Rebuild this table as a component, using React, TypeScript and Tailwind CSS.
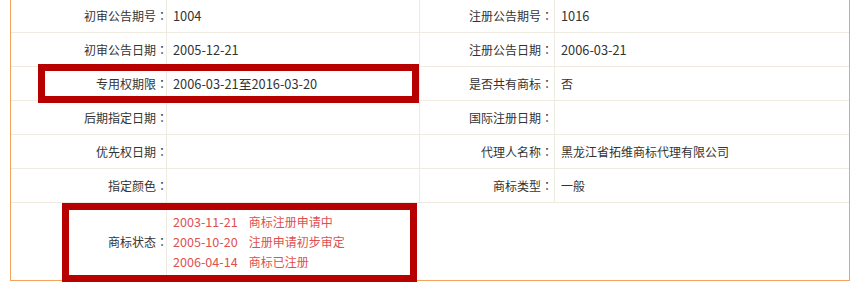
import React from 'react'

const rows = [
  ['初审公告期号', '1004', '注册公告期号', '1016'],
  ['初审公告日期', '2005-12-21', '注册公告日期', '2006-03-21'],
  ['专用权期限', '2006-03-21至2016-03-20', '是否共有商标', '否'],
  ['后期指定日期', '', '国际注册日期', ''],
  ['优先权日期', '', '代理人名称', '黑龙江省拓维商标代理有限公司'],
  ['指定颜色', '', '商标类型', '一般'],
]

const status = [
  ['2003-11-21', '商标注册申请中'],
  ['2005-10-20', '注册申请初步审定'],
  ['2006-04-14', '商标已注册'],
]

// digits in the source are a bit wider than the CJK font's own
const isNum = (s: string) => /^[0-9]/.test(s)

function Label({ text, tight }: { text: string; tight?: boolean }) {
  return (
    <>
      {text}
      {/* JP face keeps the full-width colon centred in its box */}
      <span className={`${tight ? 'mr-[-2px]' : ''} [font-family:'Noto_Sans_CJK_JP',sans-serif]`}>：</span>
    </>
  )
}

function Value({ text }: { text: string }) {
  return <span className={isNum(text) ? 'text-[12.8px]' : ''}>{text}</span>
}

export default function App() {
  return (
    <div className="relative w-[855px] h-[285px] overflow-hidden bg-white text-[12px] text-[#333] [font-family:'Noto_Sans_CJK_SC','Liberation_Sans',sans-serif]">
      <div className="ml-[10px] mt-[-1px] w-[840px] border-x border-b border-[#f3a35a]">
        {rows.map((r, i) => (
          <div key={i} className="flex h-[34px] border-b border-[#efebe1]">
            <div className="w-[156px] flex items-center justify-end border-r border-[#efebe1]"><Label text={r[0]} tight /></div>
            <div className="w-[253px] flex items-center pl-[6px] border-r border-[#efebe1]"><Value text={r[1]} /></div>
            <div className="w-[135px] flex items-center justify-end pr-[1px] border-r border-[#efebe1]"><Label text={r[2]} /></div>
            <div className="flex-1 flex items-center pl-[6px]"><Value text={r[3]} /></div>
          </div>
        ))}
        <div className="flex h-[77px]">
          <div className="w-[156px] flex items-center justify-end border-r border-[#efebe1]"><Label text="商标状态" tight /></div>
          <div className="flex-1 flex flex-col justify-center pl-[6px] text-[#e0504f] leading-[20px]">
            {status.map((s, i) => (
              <div key={i} className="flex items-baseline gap-[11px]">
                <span className="text-[12.6px]">{s[0]}</span>
                <span>{s[1]}</span>
              </div>
            ))}
          </div>
        </div>
      </div>

      {/* red annotation boxes */}
      <div className="absolute left-[38px] top-[64px] w-[381px] h-[39px] border-[7px] border-[#b70000]" />
      <div className="absolute left-[62px] top-[203px] w-[355px] h-[79px] border-[7px] border-[#b70000]" />
    </div>
  )
}
